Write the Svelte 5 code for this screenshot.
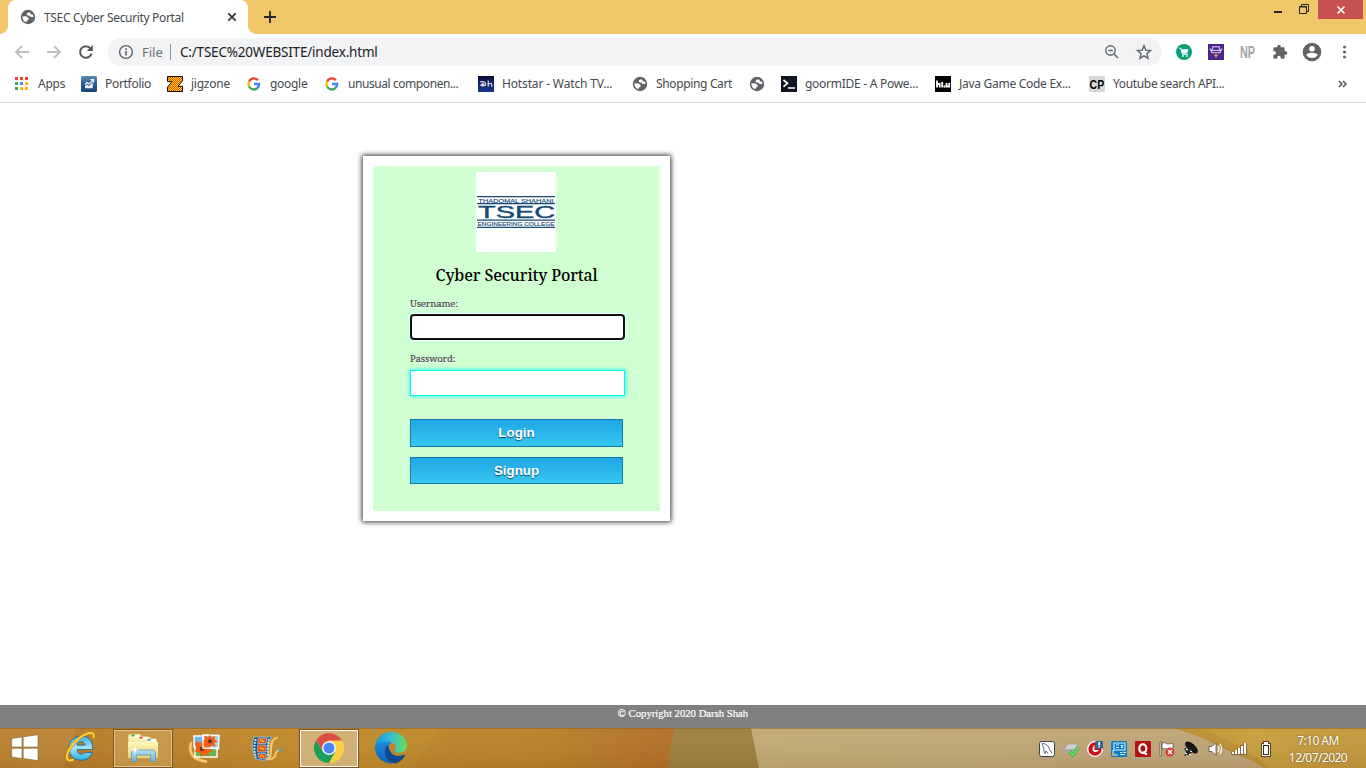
<script>
  const bookmarks = [
    { icon: 'apps', label: 'Apps', x: 14, track: -0.25 },
    { icon: 'portfolio', label: 'Portfolio', x: 81, track: -0.3 },
    { icon: 'jigzone', label: 'jigzone', x: 167, track: -0.25 },
    { icon: 'google', label: 'google', x: 246, track: -0.3 },
    { icon: 'google', label: 'unusual componen...', x: 324, track: -0.43 },
    { icon: 'hotstar', label: 'Hotstar - Watch TV...', x: 478, track: -0.15 },
    { icon: 'globe', label: 'Shopping Cart', x: 632, track: -0.35 },
    { icon: 'globe', label: '', x: 749, track: 0 },
    { icon: 'goorm', label: 'goormIDE - A Powe...', x: 781, track: -0.27 },
    { icon: 'java', label: 'Java Game Code Ex...', x: 935, track: -0.28 },
    { icon: 'cp', label: 'Youtube search API...', x: 1089, track: -0.35 }
  ].map((b, i, all) => ({ ...b, width: i < all.length - 1 ? all[i + 1].x - b.x : 140 }));

  const dots = [
    ['#ea4335', '#ea4335', '#ea4335'],
    ['#34a853', '#4285f4', '#fbbc05'],
    ['#34a853', '#fbbc05', '#fbbc05']
  ];
</script>

{#snippet globe()}
  <svg class="i16" viewBox="0 0 16 16">
    <circle cx="8" cy="8" r="7.2" fill="#5f6368" />
    <path d="M9.2 3.2 7.2 4 6.6 5.6l1 .9 2 .3 1 1.3h2.9c0-1-.2-1.800-.6-2.500l-2-.2-.2-1.200ZM2.300 7.600l3.500-.3 2.200 1.200.8 1.200-.5 1.300-1.300.4-.7 1.900C4 12.700 2.300 10.500 2.300 7.600Z" fill="#fff" />
  </svg>
{/snippet}

{#snippet favicon(name)}
  {#if name === 'apps'}
    <svg class="i16" viewBox="0 0 16 16">
      {#each dots as row, r}
        {#each row as color, c}<rect x={1 + c * 5} y={1 + r * 5} width="3" height="3" fill={color} />{/each}
      {/each}
    </svg>
  {:else if name === 'portfolio'}
    <svg class="i16" viewBox="0 0 16 16">
      <defs><linearGradient id="pf" x2="0" y2="1"><stop stop-color="#5d8cb8" /><stop offset=".5" stop-color="#2c5d95" /><stop offset="1" stop-color="#183f72" /></linearGradient></defs>
      <rect width="16" height="16" rx="1.5" fill="url(#pf)" />
      <path d="M4 12.2V10l2-1.6L8 10l3.8-3.8v6Z" fill="#e7eef6" />
      <path d="m4 8.5 2.2-2 1.8 1.6 4-4M9.5 3.6h3v3" fill="none" stroke="#fff" stroke-width="1.1" />
    </svg>
  {:else if name === 'jigzone'}
    <svg class="i16" viewBox="0 0 16 16">
      <defs><pattern id="jz" width="2" height="2" patternUnits="userSpaceOnUse"><rect width="2" height="2" fill="#ffd800" /><rect width="1" height="1" fill="#f04a10" /><rect x="1" y="1" width="1" height="1" fill="#f04a10" /></pattern></defs>
      <path d="M.5.5h15v4.2L11 10.3h4.500v5.2H.5v-4.3L5 5.6H.5Z" fill="url(#jz)" stroke="#140800" />
    </svg>
  {:else if name === 'google'}
    <svg class="i16" viewBox="0 0 16 16" fill="none" stroke-width="2.3">
      <path d="M3.1 5.5A5.2 5.2 0 0 1 11.9 4.3" stroke="#ea4335" />
      <path d="M3.2 5.4a5.2 5.2 0 0 0 0 5.2" stroke="#fbbc05" />
      <path d="M3.1 10.4a5.2 5.2 0 0 0 8.3 1.7" stroke="#34a853" />
      <path d="M8 8h5.1a5.1 5.1 0 0 1-1.9 4.1" stroke="#4285f4" />
    </svg>
  {:else if name === 'hotstar'}
    <svg class="i16" viewBox="0 0 16 16">
      <defs><linearGradient id="hs" x2="0" y2="1"><stop stop-color="#080d35" /><stop offset="1" stop-color="#183a8e" /></linearGradient></defs>
      <rect width="16" height="16" fill="url(#hs)" />
      <path d="M2 5.9c3-1 6 .3 5.8 2.3-.2 1.8-3.9 2.3-4.9 1.2-.2-1.6 2.6-1.8 3.6-1M4.6 6.8v3.7M10.2 4.5v6.3M10.2 8.2q3.6-2 3.6.4v2.2" fill="none" stroke="#e9edff" stroke-width="1.1" />
    </svg>
  {:else if name === 'globe'}
    {@render globe()}
  {:else if name === 'goorm'}
    <svg class="i16" viewBox="0 0 16 16"><rect width="16" height="16" fill="#101422" /><path d="m2.5 4 4 3.3-4 3.3M7 12h7" fill="none" stroke="#fff" stroke-width="1.7" /></svg>
  {:else if name === 'java'}
    <svg class="i16" viewBox="0 0 16 16"><rect width="16" height="16" /><path d="M2 4.500v7M2 8h2.700v3.500M7.200 6v5.500M9.500 9.500v2M11.500 7v3.500h2.700M14.200 7v4.500" stroke="#fff" fill="none" stroke-width="1.800" /></svg>
  {:else if name === 'cp'}
    <svg class="i16" viewBox="0 0 16 16"><rect width="16" height="16" fill="#d7d7d7" /><text x=".6" y="12.600" font-family="Liberation Sans" font-size="13" font-weight="700" textLength="14.500" lengthAdjust="spacingAndGlyphs">CP</text></svg>
  {/if}
{/snippet}

<div class="screen">
  <header class="tabs">
    <div class="tab">
      {@render globe()}
      <span class="tab-title">TSEC Cyber Security Portal</span>
      <svg class="i16" viewBox="0 0 16 16"><path d="m4.300 4.300 7.400 7.400M11.700 4.300l-7.400 7.400" stroke="#303236" stroke-width="1.7" /></svg>
    </div>
    <svg class="plus" viewBox="0 0 16 16"><path d="M8 2v12M2 8h12" stroke="#24272b" stroke-width="1.9" /></svg>
    <div class="window-buttons">
      <svg width="12" height="16"><path d="M2 12h8" stroke="#222" stroke-width="2" /></svg>
      <svg width="12" height="16"><path d="M3.5 6V4.5h7v7H9" fill="none" stroke="#222" /><path d="M1.5 6.5h7v7h-7z" fill="none" stroke="#222" /><path d="M1 7h8" stroke="#222" /></svg>
      <div class="close"><svg width="10" height="10" viewBox="0 0 10 10"><path d="m1.5 1.5 7 7m0-7-7 7" stroke="#fff" stroke-width="1.7" /></svg></div>
    </div>
  </header>

  <div class="toolbar">
    <svg class="nav" viewBox="0 0 16 16"><path d="M15 8H2m6-6L2 8l6 6" stroke="#bcbec1" fill="none" stroke-width="1.8" /></svg>
    <svg class="nav" viewBox="0 0 16 16"><path d="M1 8h13M8 2l6 6-6 6" stroke="#bcbec1" fill="none" stroke-width="1.8" /></svg>
    <svg class="nav" viewBox="0 0 16 16"><path d="M13.5 9.4A5.8 5.8 0 1 1 12.4 4.4" stroke="#54575b" fill="none" stroke-width="2" /><path d="M14.8 1v6H8.8Z" fill="#54575b" /></svg>
    <div class="address">
      <svg class="i16" viewBox="0 0 16 16"><circle cx="8" cy="8" r="6.4" fill="none" stroke="#5f6368" stroke-width="1.4" /><path d="M8 7v4.5M8 4.3v1.6" stroke="#5f6368" stroke-width="1.6" /></svg>
      <span class="scheme">File</span><i></i><span class="url">C:/TSEC%20WEBSITE/index.html</span>
      <svg class="i16 zoom" viewBox="0 0 16 16"><circle cx="6.5" cy="6.5" r="4.7" fill="none" stroke="#5f6368" stroke-width="1.4" /><path d="M4.2 6.5h4.6M10 10l4 4" stroke="#5f6368" stroke-width="1.5" /></svg>
      <svg class="i16" viewBox="0 0 16 16"><path d="m8 1.8 1.8 4.3 4.7.4-3.6 3.1 1.1 4.6L8 11.8l-4 2.4 1.1-4.6-3.6-3.1 4.7-.4Z" fill="none" stroke="#5f6368" stroke-width="1.4" /></svg>
    </div>
    <div class="extensions">
      <svg class="i16" viewBox="0 0 16 16"><circle cx="8" cy="8" r="8" fill="#08a17c" /><path d="M3.2 4.3h1.7l1.5 6h5.4" fill="none" stroke="#fff" /><path d="M5.2 5.2h7.2l-1.2 4.2H6.2Z" fill="#fff" /><circle cx="7" cy="12" r=".9" fill="#fff" /><circle cx="11" cy="12" r=".9" fill="#fff" /></svg>
      <svg class="i16" viewBox="0 0 16 16"><rect width="16" height="16" fill="#49258e" /><path d="M4.7 5.5V2.7h6.6v2.8M2.5 5.3 4 8.8h8l1.5-3.5-2.2 1.2H4.7Z" fill="none" stroke="#ddd0ee" stroke-width="1.1" /><path d="M5.8 10.5h4.4L8 14Z" fill="#f5a64b" /></svg>
      <svg class="i16" viewBox="0 0 16 16"><text x="0" y="13.600" font-family="Liberation Sans" font-size="16" font-weight="700" fill="#a2a2a2" textLength="15" lengthAdjust="spacingAndGlyphs">NP</text></svg>
      <svg class="i16" viewBox="0 0 24 24"><path d="M20.5 11H19V7a2 2 0 0 0-2-2h-4V3.5a2.5 2.5 0 0 0-5 0V5H4a2 2 0 0 0-2 2v3.8h1.5a2.7 2.7 0 0 1 0 5.4H2V20a2 2 0 0 0 2 2h3.8v-1.5a2.7 2.7 0 0 1 5.4 0V22H17a2 2 0 0 0 2-2v-4h1.5a2.5 2.5 0 0 0 0-5Z" fill="#5f6368" /></svg>
      <svg class="profile" viewBox="0 0 20 20"><circle cx="10" cy="10" r="9.3" fill="#5f6368" /><circle cx="10" cy="6.7" r="2.8" fill="#fff" /><path d="M4.2 13.1c1.5-3 10.1-3 11.6 0-2.2 4-9.4 4-11.6 0Z" fill="#fff" /></svg>
      <svg class="i16" viewBox="0 0 16 16" fill="#5f6368"><circle cx="8.5" cy="3" r="1.5" /><circle cx="8.5" cy="8" r="1.5" /><circle cx="8.5" cy="13" r="1.5" /></svg>
    </div>
  </div>

  <nav class="bookmarks">
    {#each bookmarks as item}
      <div class="bookmark" style="width:{item.width}px">
        {@render favicon(item.icon)}
        <span style="letter-spacing:{item.track}px">{item.label}</span>
      </div>
    {/each}
    <svg class="more" width="12" height="12" viewBox="0 0 12 12"><path d="m2 3 3 3-3 3m4-6 3 3-3 3" fill="none" stroke="#505357" stroke-width="1.5" /></svg>
  </nav>

  <main>
    <form class="login" onsubmit={(e) => e.preventDefault()}>
      <svg class="logo" width="80" height="80" viewBox="0 0 80 80" font-family="Liberation Sans" fill="#174a77">
        <rect width="80" height="80" fill="#fff" />
        <path d="M1 24h78v1.2H1zM1 31h78v1.2H1zM1 47.5h78v1.2H1zM1 54.8h78v1.2H1z" />
        <text x="2.5" y="30.6" font-size="6.2" textLength="75" lengthAdjust="spacingAndGlyphs" stroke="#174a77" stroke-width=".15">THADOMAL SHAHANI</text>
        <text x="2" y="46" font-size="16.8" textLength="77" lengthAdjust="spacingAndGlyphs" stroke="#174a77" stroke-width=".4">TSEC</text>
        <text x="1.5" y="54.3" font-size="6" textLength="77" lengthAdjust="spacingAndGlyphs" stroke="#174a77" stroke-width=".15">ENGINEERING COLLEGE</text>
      </svg>
      <h1>Cyber Security Portal</h1>
      <label for="user">Username:</label>
      <input id="user" class="active" type="text" />
      <label for="pass" class="second">Password:</label>
      <input id="pass" type="password" />
      <button class="first">Login</button>
      <button>Signup</button>
    </form>
  </main>

  <footer>© Copyright 2020 Darsh Shah</footer>

  <div class="taskbar">
    <svg class="wallpaper" viewBox="0 0 1366 40" preserveAspectRatio="none">
      <defs>
        <linearGradient id="wa"><stop stop-color="#b98131" /><stop offset="1" stop-color="#bd8635" /></linearGradient>
        <linearGradient id="wb"><stop stop-color="#b57a28" /><stop offset=".6" stop-color="#c18a2b" /><stop offset="1" stop-color="#bf892b" /></linearGradient>
        <linearGradient id="wc"><stop stop-color="#bc852a" /><stop offset=".5" stop-color="#b98029" /><stop offset="1" stop-color="#b26f27" /></linearGradient>
        <linearGradient id="wd"><stop stop-color="#c2aa76" /><stop offset="1" stop-color="#bda478" /></linearGradient>
        <linearGradient id="we"><stop stop-color="#c0912f" /><stop offset=".4" stop-color="#c79f3c" /><stop offset="1" stop-color="#c2983e" /></linearGradient>
        <linearGradient id="shade" x2="0" y2="1"><stop stop-color="#fff" stop-opacity=".03" /><stop offset="1" stop-color="#502a00" stop-opacity=".09" /></linearGradient>
      </defs>
      <rect width="80" height="40" fill="url(#wa)" />
      <path d="M76 0H440L412 40H63Z" fill="url(#wb)" />
      <path d="M440 0H674L667 40H412Z" fill="url(#wc)" />
      <path d="M674 0H751L759 40H667Z" fill="#9d803d" />
      <path d="M751 0H1180L1267 40H759Z" fill="url(#wd)" />
      <path d="M1174 0H1366V40H1264Q1230 18 1174 0Z" fill="url(#we)" />
      <path d="M1174 0h22q40 12 74 40h-6q-34-22-90-40Z" fill="#b88b30" opacity=".7" />
      <rect width="1366" height="40" fill="url(#shade)" />
      <path d="M0 .5H1366" stroke="#8a6028" opacity=".55" />
    </svg>
    <div class="launchers">
      <span class="slot windows"><svg width="28" height="28" viewBox="0 0 28 28"><path d="M.7 4.4 11 3v10H.7ZM12.2 2.8 27 .7V13H12.2ZM.7 14.2H11v10.4L.7 23.1ZM12.2 14.2H27v12.4l-14.8-2Z" fill="#fff" stroke="#8f6e3d" stroke-width=".7" /></svg></span>
      <span class="slot ie"><svg width="34" height="34" viewBox="0 0 34 34">
        <defs><linearGradient id="ie" x2="0" y2="1"><stop stop-color="#3bb1e6" /><stop offset=".5" stop-color="#a6e4f8" /><stop offset="1" stop-color="#2eaee4" /></linearGradient></defs>
        <path d="M13 19.5H28.6C29 10 24 6 17.5 6 10 6 5 11 5 18.2 5 25.4 10 30.2 17.5 30.2c5.5 0 9.2-2.7 10.6-7.7h-7.3c-2.5 3.3-7.8 1.8-7.8-3Zm0-4.4c.6-4.6 7.6-4.8 8.3 0Z" fill="url(#ie)" stroke="#15659d" stroke-width=".8" />
        <path d="M9 29.8C-1 33.5 2 21 11.5 11.5 20 3 31.5-.5 29.6 7.5" fill="none" stroke="#b97909" stroke-width="3" stroke-linecap="round" /><path d="M9 29.8C-1 33.5 2 21 11.5 11.5 20 3 31.5-.5 29.6 7.5" fill="none" stroke="#ffd33a" stroke-width="2" stroke-linecap="round" />
      </svg></span>
      <span class="slot open"><svg width="34" height="32" viewBox="0 0 34 32">
        <defs><linearGradient id="folder" x2="0" y2="1"><stop stop-color="#fff7bb" /><stop offset="1" stop-color="#e9d07c" /></linearGradient><linearGradient id="glass" x2="0" y2="1"><stop stop-color="#b9e0f0" /><stop offset="1" stop-color="#66b5dc" /></linearGradient></defs>
        <path d="M3 2h11l2 2.5h8l1 2.5h6l1 19H2V4Z" fill="url(#folder)" stroke="#c6a14d" stroke-width=".7" />
        <path d="M5 2.8h8v3H5zM13 4.8h9v3h-9zM21 6.8h9v3h-9z" fill="#fffde4" /><path d="M5.5 2.5h3v2h-3z" fill="#21b233" /><path d="M13.5 4.7h3v2h-3z" fill="#df4936" /><path d="M21.5 6.8h3v2h-3z" fill="#37a6e8" />
        <path d="M2 10h30v16H2Z" fill="url(#folder)" /><path d="M5.5 29.5V20l2-2h20l2 2v9.5h-5V23h-14v6.5Z" fill="url(#glass)" stroke="#579bbc" stroke-width=".8" /><path d="m9 13 .8 4 4 1-4 .8-.8 4-.8-4-4-.8 4-1Z" fill="#fff" />
      </svg></span>
      <span class="slot"><svg width="32" height="32" viewBox="0 0 32 32">
        <path d="M2 11Q-2 27 17 29.5" fill="none" stroke="#ffc86d" stroke-width="2.6" stroke-linecap="round" /><g stroke="#fff" stroke-width="1.4"><path d="M5 4h12v11H5z" fill="#76b5e2" /><path d="M6 13h22v12H6z" fill="#69b54d" /><path d="m14 3 16 .5-.5 13L14 16Z" fill="#a7d2ee" /></g>
        <g fill="#f0601a"><path d="m21 3 1.5 2.5L26 4l-.5 3.5 3.5 2-3.5 1.500 1 4-4-1.500-2 2.500-1.500-3-4 1 1-3.500L13 9l3-2-1-3.500 4 1.500Z" /><path d="m7 9 4 2 4-3 2 4 5-1-1 5 2.500 3.500-4 1 .500 4-5-2-3 2.500-1.500-4.500-5-1 2.500-3.500L6 13Z" /></g><circle cx="21" cy="9.3" r="2" fill="#792310" /><circle cx="13" cy="17" r="2.300" fill="#872b12" /><path d="M14 3v13l15 .5" stroke="#fff" fill="none" stroke-width="1.300" />
      </svg></span>
      <span class="slot"><svg width="32" height="28" viewBox="0 0 32 28">
        <path d="M3 3h18q-4 3-4 8v11q0 3 2 4-8 1-14-1Q-1 12 3 3Z" fill="#244e70" stroke="#8fc7e8" stroke-width=".8" /><path d="M7.500 4h8.500l-1 5.500H6.500ZM6.500 11H15v7H6.500ZM6.500 19.500H15l1 5q-5 1-8-.5Z" fill="#ea521a" stroke="#8ec8e8" stroke-width=".8" /><path d="M9 6l4 1.500M9 13.500l4 2M9 21.500l4 1" stroke="#ffac25" stroke-width="1.6" fill="none" /><path d="M4.700 5Q2 14 5 24M18 5q-2 9-.5 20" stroke="#b5e1f6" stroke-width="2" stroke-dasharray="2 1" fill="none" /><path d="M27 3.500q-7 1-7 11 0 9-2.500 10.500 7 0 7-5 1-4 5-4" fill="none" stroke="#f2c56b" stroke-width="2.200" /><path d="m27 17 2-4 3 5Z" fill="#5b9bb8" />
      </svg></span>
      <span class="slot open chrome"><svg width="30" height="30" viewBox="0 0 30 30">
        <circle cx="15" cy="15" r="15" fill="#fcd044" /><path d="M2 7.5A15 15 0 0 1 28 7.5H15L9 18.5Z" fill="#d94f43" /><path d="M2 7.5A15 15 0 0 0 15 30l6.3-11.2H9Z" fill="#199e5b" /><path d="M15 8h13.2A15 15 0 0 1 15 30l6.500-11Z" fill="#fcd044" /><circle cx="15" cy="15" r="7" fill="#f5f5f5" /><circle cx="15" cy="15" r="5.5" fill="#4989f5" />
      </svg></span>
      <span class="slot"><svg width="32" height="32" viewBox="0 0 32 32">
        <defs><linearGradient id="edge1"><stop stop-color="#1692db" /><stop offset=".5" stop-color="#32c0d5" /><stop offset="1" stop-color="#6be050" /></linearGradient><linearGradient id="edge2" x2="0" y2="1"><stop stop-color="#1c8ede" /><stop offset="1" stop-color="#0c5fb5" /></linearGradient></defs>
        <path d="M0 15v2a16 16 0 0 0 30 6c-6 3-12 1-14-3V9H3Z" fill="url(#edge2)" />
        <path d="M12 13c-5 8 0 17 8 18.500 4-1 8-4 9.500-7.500.7-1.500-.5-1.500-1.500-1-6 2.800-14-.5-14-8Z" fill="#0a4a90" />
        <path d="M0 15C1 5 8 0 16 0c9 0 16 6 16 13 0 5-4 8-8 8-3 0-5-1-4-3 3-5-2-9-8-8.500C6 9.500 1 12 0 15Z" fill="url(#edge1)" />
        <path d="M14 13c1.500-1.500 5-1 6 .5 1.500 2.500-.7 4-.4 5.500.7 2 4.400 2.500 12 1.700-4 3.500-11 3.200-14.600 0-3-2-4-5.700-3-7.700Z" fill="#bb842d" />
      </svg></span>
    </div>
    <div class="tray">
      <svg class="i16" viewBox="0 0 16 16"><rect x=".5" y=".5" width="15" height="15" rx="2" fill="#fff" stroke="#39434c" /><path d="M3.200 2.500c3.500-.2 6.500 2.500 7.300 6l2.500 3.500M3.200 2.500c.2 3 1.800 3.800 1.800 6.500 0 2 .4 3.500 1.200 3.500L7 10l2 2.500" fill="none" stroke="#53616e" /></svg>
      <svg class="i16" viewBox="0 0 16 16"><path d="m1 8 4-5h10l-3 6H1Z" fill="#d0d0d0" stroke="#999" stroke-width=".8" /><path d="M1 8h12v4H1Z" fill="#aaa" /><path d="m6.500 10.500 3 3.500L15 6.500" stroke="#1f9a3a" fill="none" stroke-width="3.200" /><path d="m6.500 10.500 3 3.500L15 6.500" stroke="#5bdf5c" fill="none" stroke-width="2.200" /></svg>
      <svg class="i16" viewBox="0 0 16 16"><circle cx="8" cy="8" r="7.300" fill="#cd1017" stroke="#fff" stroke-width="1.300" /><path d="M7.500 4V9H12q-1.500 2.500-4 2Q5.300 10.500 5.500 7.500 6 5 7.500 4" fill="#fff" /><path d="M8.500 0H16v7.500H8.500Z" fill="#2e659b" /><path d="M12.200 1v3.500m0 .8v1.200" stroke="#fff" stroke-width="1.800" /></svg>
      <svg class="i16" viewBox="0 0 16 16"><rect width="16" height="16" rx="1.500" fill="#087dc3" /><path d="M3 2h11v7H3ZM5 4h3M5 6.500h3M10 4l2 3m0-3-2 3M2 9v5h5M9 11.500h2.500m1 0H15M9 13.500h5" fill="none" stroke="#d9f1ff" stroke-width="1.100" /><path d="M1 12h3v3H1Z" fill="#f39a37" opacity=".7" /></svg>
      <svg class="i16" viewBox="0 0 16 16"><rect width="16" height="16" rx="1" fill="#b71116" /><ellipse cx="7.800" cy="7.500" rx="3.500" ry="4.300" fill="none" stroke="#fff" stroke-width="2.200" /><path d="m8 11 4 2.600" stroke="#fff" stroke-width="2" /></svg>
      <svg class="i16" viewBox="0 0 16 16"><path d="M1 1h1.500v14H1Z" fill="#fff" stroke="#514a3c" stroke-width=".7" /><path d="M3 2q4-1 5 1 4 0 6-1v7q-5 2-6-1-3-1-5 0Z" fill="#fff" stroke="#514a3c" stroke-width=".7" /><circle cx="11" cy="11" r="4.500" fill="#d63d3a" /><path d="m9 9 4 4m0-4-4 4" stroke="#fff" stroke-width="1.400" /></svg>
      <svg class="i16" viewBox="0 0 16 16"><ellipse cx="8.500" cy="6.500" rx="8" ry="3.800" transform="rotate(42 8.500 6.500)" fill="#151515" /><path d="M1 7l5 1 3 3-2 3H4L1 15l2-4Z" fill="#222" /><path d="m3 8 2 1m2 1 2 .5M2 12l2 1m2 0 2 1" stroke="#fff" stroke-width="1.200" /></svg>
      <svg class="i16" viewBox="0 0 16 16"><path d="M2 5.500h3l4-4v13l-4-4H2Z" fill="#fff" stroke="#554c3c" stroke-width=".8" /><path d="M11 5q2 3 0 6m2-8q3 5 0 10" stroke="#fff" fill="none" stroke-width="1.100" /></svg>
      <svg class="i16" viewBox="0 0 16 16" shape-rendering="crispEdges"><path d="M0 11h3v3H0Zm3-2h3v5H3Zm3-2h3v7H6Zm3-3h3v10H9Zm3-2h4v12h-4Z" fill="#67573a" opacity=".7" /><path d="M1 11h2v2H1Zm3-2h2v4H4Zm3-2h2v6H7Zm3-2h2v8h-2Zm3-3h2v11h-2Z" fill="#fff" /></svg>
      <svg class="i16 battery" viewBox="0 0 16 16" shape-rendering="crispEdges"><path d="M6 0h6v2h2v14H4V2h2Z" fill="#55472c" /><path d="M7 1h4v2h2v12H5V3h2Z" fill="#fff" /><path d="M6 4h6v10H6Z" fill="#33291a" /><path d="M7 5h4v8H7Z" fill="#fff" /></svg>
    </div>
    <div class="clock"><span>7:10 AM</span><span>12/07/2020</span></div>
  </div>
</div>

<style>
  :global(body) { margin: 0; overflow: hidden; }
  * { box-sizing: border-box; }
  svg { display: block; flex-shrink: 0; overflow: visible; }
  .screen { width: 1366px; height: 768px; display: flex; flex-direction: column; background: #fff; overflow: hidden; font-family: "Noto Sans", "Open Sans", sans-serif; }
  .i16 { width: 16px; height: 16px; flex: 0 0 16px; }
  .tabs { height: 34px; flex: none; display: flex; background: #f0c869; padding-left: 8px; }
  .tab { width: 240px; background: #fff; border-radius: 8px 8px 0 0; display: flex; align-items: center; padding: 0 8px 0 12px; color: #45494d; font-size: 12px; position: relative; }
  .tab::before, .tab::after { content: ""; position: absolute; bottom: 0; width: 8px; height: 8px; }
  .tab::before { left: -8px; background: radial-gradient(circle at 0 0, transparent 7.5px, #fff 8px); }
  .tab::after { right: -8px; background: radial-gradient(circle at 100% 0, transparent 7.5px, #fff 8px); }
  .tab-title { margin-left: 8px; width: 180px; white-space: nowrap; letter-spacing: -.33px; }
  .plus { width: 16px; height: 16px; margin: 9px 0 0 14px; }
  .window-buttons { margin-left: auto; display: flex; height: 19px; padding-right: 3px; }
  .window-buttons > svg:nth-child(2) { margin: 0 8px 0 14px; }
  .close { width: 45px; background: #c75050; display: flex; align-items: center; justify-content: center; }
  .toolbar { height: 36px; flex: none; display: flex; align-items: center; padding-left: 14px; }
  .nav { width: 16px; height: 16px; margin-right: 16px; }
  .nav:nth-child(3) { margin-right: 14px; }
  .address { width: 1054px; height: 28px; border-radius: 14px; background: #f1f3f4; display: flex; align-items: center; padding: 0 10px; font-size: 14px; }
  .scheme { color: #6b6f73; font-size: 13px; margin-left: 8px; width: 28px; }
  .address i { height: 16px; width: 1px; background: #96999c; }
  .url { color: #202124; font-size: 13.5px; margin-left: 9px; letter-spacing: -.2px; white-space: nowrap; }
  .zoom { margin: 0 16px 0 auto; }
  .extensions { display: flex; align-items: center; padding-left: 14px; gap: 16px; }
  .profile { width: 20px; height: 20px; margin: 0 -2px; }
  .bookmarks { height: 33px; flex: none; display: flex; align-items: center; padding: 0 0 4px 14px; border-bottom: 1px solid #d4d6d9; color: #45494d; font-size: 12px; }
  .bookmark { height: 20px; display: flex; align-items: center; gap: 8px; white-space: nowrap; flex: none; }
  .bookmark span { line-height: 16px; padding-bottom: 1px; }
  .more { margin-left: 108px; }
  main { flex: 1; min-height: 0; padding: 53px 0 0 363px; }
  .login { width: 307px; height: 365px; border: 10px solid #fff; background: #d0ffd1; box-shadow: 0 0 5px 1px #333; display: flex; flex-direction: column; padding: 6px 37px 0; }
  .logo { align-self: center; margin-left: -1px; }
  h1 { margin: 11px 0 0; height: 27px; font: 500 16px/24px "Noto Serif", "DejaVu Serif Condensed", serif; letter-spacing: -.14px; text-align: center; white-space: nowrap; color: #000; }
  label { height: 14px; margin-top: 6px; font: 9.5px/15px "Noto Serif", "DejaVu Serif Condensed", serif; letter-spacing: -.12px; color: #444; -webkit-text-stroke: .15px #444; text-shadow: 0 1px #fff; }
  input { width: 215px; height: 26px; margin: 4px 0 0; padding: 3px; border: 1px solid #00f5ff; outline: none; background: #fff; box-shadow: 0 0 4px #00f5ff; }
  input.active { border: 2px solid #101010; border-radius: 4px; box-shadow: 0 0 0 1px #fff, 0 0 4px #8fffff; }
  label.second { margin-top: 11px; }
  #pass { margin-top: 5px; }
  button { width: 213px; height: 27px; margin-top: 10px; padding: 0; border: 1px solid #147cad; background: linear-gradient(#20a6e5, #36c7ef); color: #fff; font: bold 13.33px/23px "Liberation Sans", sans-serif; text-shadow: 0 1px 1px #124a68; }
  button.first { height: 28px; margin-top: 23px; padding-bottom: 2px; }
  footer { height: 23px; flex: none; background: #808080; color: #fff; text-align: center; font: 10.7px/17px "Liberation Serif", serif; -webkit-text-stroke: .2px #fff; }
  .taskbar { height: 40px; flex: none; display: flex; align-items: center; position: relative; background: #ba8333; }
  .wallpaper { position: absolute; inset: 0; width: 100%; height: 100%; overflow: hidden; }
  .launchers { display: flex; position: relative; height: 40px; align-items: center; }
  .slot { width: 62px; height: 39px; display: flex; align-items: center; justify-content: center; }
  .slot.windows { width: 50px; }
  .slot.ie { padding-bottom: 2px; }
  .slot.open { width: 60px; border: 1px solid #80531f; background: #dfb97566; box-shadow: inset 0 0 0 1px #ddc292; margin: 0 1px; }
  .slot.chrome { background: #d6bc88cc; box-shadow: inset 0 0 0 1px #fff; }
  .tray { position: relative; margin: 2px 0 0 auto; display: flex; gap: 8px; }
  .battery { margin-left: 2px; }
  .clock { position: relative; margin: 1px 18px 0 15px; width: 60px; color: #fff; display: flex; flex-direction: column; align-items: center; font-size: 12px; line-height: 17px; letter-spacing: -.55px; white-space: nowrap; text-shadow: 0 0 2px #6a501b; }
</style>
